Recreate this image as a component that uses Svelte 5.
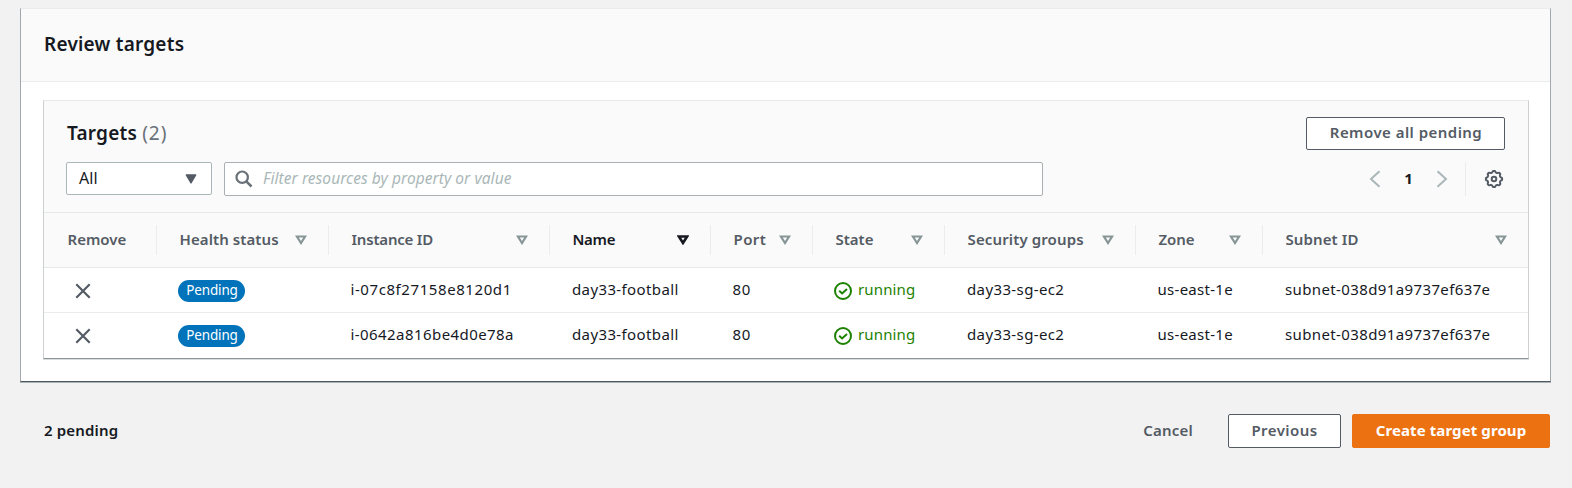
<script>
  const columns = [
    { label: 'Remove', width: 113, spacing: 0 },
    { label: 'Health status', width: 172, spacing: 0.09, sort: true },
    { label: 'Instance ID', width: 221, spacing: -0.2, sort: true },
    { label: 'Name', width: 161, spacing: -0.3, sort: true, active: true },
    { label: 'Port', width: 102, spacing: 0.44, sort: true },
    { label: 'State', width: 132, spacing: 0, sort: true },
    { label: 'Security groups', width: 191, spacing: 0.13, sort: true },
    { label: 'Zone', width: 127, spacing: -0.1, sort: true },
    { label: 'Subnet ID', width: 265, spacing: 0.1, sort: true }
  ];
  const grid = columns.map((c) => c.width + 'px').join(' ');

  const targets = [
    { id: 'i-07c8f27158e8120d1', spacing: 0.58 },
    { id: 'i-0642a816be4d0e78a', spacing: 0.43 }
  ].map((t) => ({
    ...t,
    name: 'day33-football',
    port: 80,
    state: 'running',
    group: 'day33-sg-ec2',
    zone: 'us-east-1e',
    subnet: 'subnet-038d91a9737ef637e'
  }));

  // Outline of the settings gear: a circle whose radius swells into eight teeth.
  const gear = Array.from({ length: 96 }, (_, i) => {
    const a = (i / 96) * Math.PI * 2;
    const r = 7.4 + 0.75 * Math.tanh(2 * Math.cos(8 * a));
    return (10 + r * Math.cos(a)).toFixed(2) + ',' + (10 + r * Math.sin(a)).toFixed(2);
  }).join(' ');
</script>

<main>
  <section class="card">
    <header class="card-head"><h2>Review targets</h2></header>
    <div class="card-body">
      <div class="panel">
        <div class="tools">
          <div class="line title-line">
            <h2>Targets <span>(2)</span></h2>
            <button class="btn remove-all">Remove all pending</button>
          </div>
          <div class="line filter-line">
            <div class="select">
              <span>All</span>
              <svg width="12" height="10" viewBox="0 0 12 10"><path d="M1.300 1h9.400L6 8.800z" fill="#545b64" stroke="#545b64" stroke-width="1.4" stroke-linejoin="round" /></svg>
            </div>
            <div class="search">
              <svg width="18" height="18" viewBox="0 0 18 18" fill="none" stroke="#687078" stroke-width="2.2"><circle cx="7.2" cy="7.2" r="5.700" /><path d="M11.300 11.300l5.200 5.200" stroke-width="2.500" /></svg>
              <span>Filter resources by property or value</span>
            </div>
            <div class="pages">
              <svg width="12" height="18" viewBox="0 0 12 18"><path d="M10.500 1.200L2 9l8.500 7.800" /></svg>
              <b>1</b>
              <svg width="12" height="18" viewBox="0 0 12 18"><path d="M1.500 1.200L10 9l-8.500 7.800" /></svg>
            </div>
            <div class="prefs">
              <svg width="20" height="20" viewBox="0 0 20 20" fill="none" stroke="#545b64" stroke-width="2" stroke-linejoin="round">
                <polygon points={gear} />
                <circle cx="10" cy="10" r="2.300" />
              </svg>
            </div>
          </div>
        </div>

        <div class="row head" style:grid-template-columns={grid}>
          {#each columns as c}
            <div class="th" class:active={c.active}>
              <span style:letter-spacing="{c.spacing}px">{c.label}</span>
              {#if c.sort}
                <svg width="12" height="10" viewBox="0 0 12 10"><path d="M1.900 1.500h8.200L6 8z" /></svg>
              {/if}
            </div>
          {/each}
        </div>

        {#each targets as t}
          <div class="row data" style:grid-template-columns={grid}>
            <div class="remove">
              <svg width="16" height="16" viewBox="0 0 16 16"><path d="M1.300 1.300l13.400 13.400M14.700 1.300L1.300 14.700" stroke="#545b64" stroke-width="2.200" /></svg>
            </div>
            <div class="health"><span class="badge">Pending</span></div>
            <div class="id" style:letter-spacing="{t.spacing}px">{t.id}</div>
            <div>{t.name}</div>
            <div class="port">{t.port}</div>
            <div class="state">
              <svg width="18" height="18" viewBox="0 0 18 18" fill="none" stroke="#1d8102" stroke-width="2"><circle cx="9" cy="9" r="8" /><path d="M5.200 8.800l2.900 2.700 4.900-4.500" /></svg>
              <span>{t.state}</span>
            </div>
            <div>{t.group}</div>
            <div class="zone">{t.zone}</div>
            <div>{t.subnet}</div>
          </div>
        {/each}
      </div>
    </div>
  </section>

  <footer>
    <strong>2 pending</strong>
    <button class="cancel">Cancel</button>
    <button class="btn previous">Previous</button>
    <button class="btn primary">Create target group</button>
  </footer>
</main>

<style>
  :global(body) { background: #f2f2f2; }
  main {
    box-sizing: border-box;
    width: 1572px;
    height: 488px;
    padding: 8px 21px 0 20px;
    background: #f2f2f2;
    font-family: "Noto Sans", sans-serif;
    font-size: 15px;
    line-height: 20px;
    color: #16191f;
    overflow: hidden;
  }
  main :global(*) { box-sizing: border-box; }
  svg { display: block; flex: none; }
  h2 { margin: 0; font-size: 19px; line-height: 26px; font-weight: 600; letter-spacing: .22px; white-space: nowrap; }
  h2 span { font-weight: 400; color: #687078; letter-spacing: .9px; }
  .card {
    height: 374px;
    background: #fff;
    border: 1px solid #a2a8ab;
    border-top-color: #e9ebed;
    border-bottom-color: #4d5a61;
    box-shadow: 0 1px 0 #aab2b5;
  }
  .card-head { height: 73px; padding: 22px 23px 0; background: #fafafa; border-bottom: 1px solid #eaeded; }
  .card-body { padding: 18px 21px 22px 22px; }
  .panel {
    background: #fff;
    border: 1px solid #cdd1d2;
    border-top-color: #e6e9e9;
    border-bottom-color: #8c9699;
    box-shadow: 0 1px 0 #d9dddd;
  }
  .tools { height: 112px; padding: 16px 23px 0 22px; background: #fafafa; border-bottom: 1px solid #e6e9e9; }
  .line { display: flex; }
  .title-line { height: 45px; justify-content: space-between; align-items: flex-start; }
  .title-line h2 { padding: 3px 0 0 1px; }
  button { font: 600 15px/20px "Noto Sans", sans-serif; padding: 0 0 2px; color: #545b64; white-space: nowrap; }
  .btn { height: 34px; border: 1px solid #545b64; border-radius: 2px; background: #fff; letter-spacing: .44px; }
  .remove-all { width: 199px; height: 33px; letter-spacing: .46px; padding: 0 0 3px 1px; }
  .filter-line { height: 34px; }
  .select {
    display: flex; align-items: center; justify-content: space-between;
    width: 146px; height: 33px; margin-right: 12px; padding: 0 14px 0 12px;
    background: #fff; border: 1px solid #aab7b8; border-radius: 2px;
  }
  .select span { font-size: 16px; letter-spacing: .1px; padding-bottom: 2px; }
  .search {
    display: flex; align-items: center;
    width: 819px; height: 34px; padding-left: 10px; gap: 10px;
    background: #fff; border: 1px solid #aab0b3; border-radius: 2px;
  }
  .search span { font-size: 15.5px; font-style: italic; color: #aab7b8; letter-spacing: .06px; padding-bottom: 2px; }
  .pages { display: flex; align-items: center; margin-left: auto; width: 96px; }
  .pages svg { fill: none; stroke: #aab7b8; stroke-width: 2; }
  .pages b { flex: 1; text-align: center; font-weight: 700; padding-bottom: 3px; }
  .pages svg:last-child { margin-right: 17px; }
  .prefs { width: 40px; height: 34px; padding: 7px 0 0 18px; border-left: 1px solid #eaeded; }

  .row { display: grid; align-items: center; }
  .head { height: 55px; background: #fafafa; border-bottom: 1px solid #e6e9e9; }
  .th {
    display: flex; align-items: center; justify-content: space-between;
    height: 30px; padding: 0 21px 0 22.5px;
    border-right: 1px solid #eaeded;
    font-weight: 600; color: #545b64; white-space: nowrap;
  }
  .th:first-child { padding-left: 23.5px; }
  .th:last-child { border-right: 0; }
  .th span { padding-bottom: 2px; }
  .th svg { fill: none; stroke: #879596; stroke-width: 2.2; stroke-linejoin: miter; }
  .th.active { color: #16191f; }
  .th.active svg { stroke: #16191f; stroke-width: 2.600; }
  .data { height: 45px; border-bottom: 1px solid #eaeded; }
  .data:last-child { border-bottom: 0; padding-bottom: 1px; }
  .data > div { padding: 0 0 2px 22px; letter-spacing: .38px; white-space: nowrap; }
  .data > .id { padding-left: 21.5px; }
  .data > .port { letter-spacing: .7px; padding-left: 21.5px; }
  .data > .zone { letter-spacing: .28px; padding-left: 21.5px; }
  .data > .remove { padding: 2px 0 0 31px; }
  .data > .health { padding: 2px 0 0 21px; }
  .badge {
    display: block; width: 67px; height: 22px; border-radius: 11px; padding-left: 1px;
    background: #0073bb; color: #fff;
    font-size: 13.5px; line-height: 20px; text-align: center; letter-spacing: -.15px;
  }
  .data > .state { display: flex; align-items: center; gap: 6px; padding: 0 0 0 21px; color: #1d8102; letter-spacing: .14px; }
  .state svg { position: relative; top: 1px; }
  .state span { padding-bottom: 2px; }

  footer { display: flex; align-items: center; padding: 32px 1px 0 24px; }
  footer strong { font-weight: 600; letter-spacing: .16px; padding-bottom: 3px; }
  .cancel { margin-left: auto; margin-right: 35px; border: 0; background: transparent; letter-spacing: .22px; }
  .previous { width: 113px; margin-right: 11px; }
  .primary { width: 198px; background: #ec7211; border-color: #ec7211; color: #fff; font-weight: 700; letter-spacing: .1px; }
</style>
